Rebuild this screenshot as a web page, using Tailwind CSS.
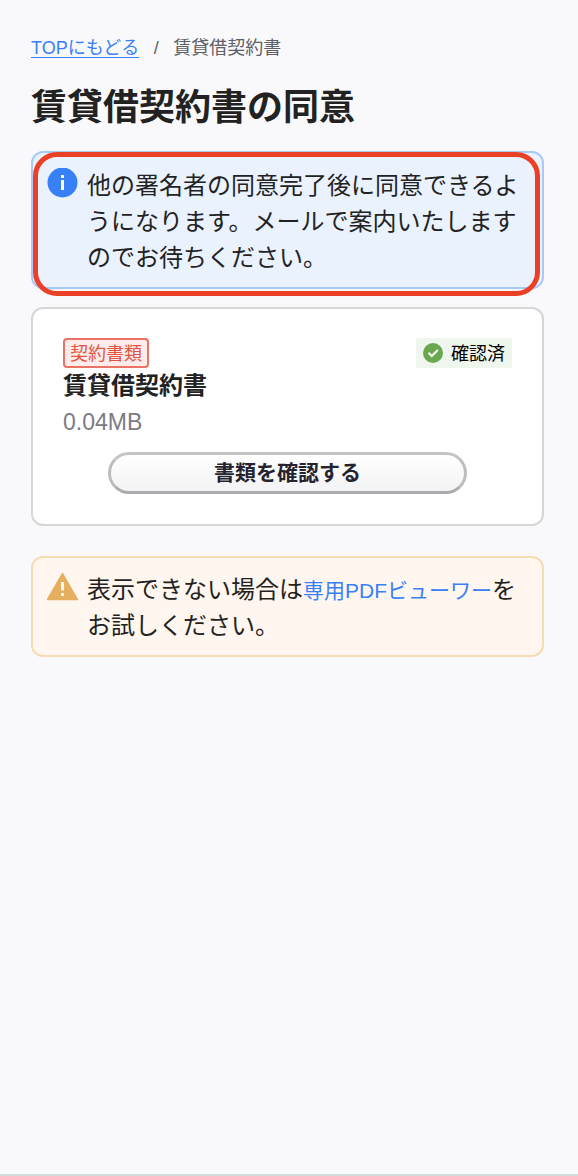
<!DOCTYPE html>
<html lang="ja">
<head>
<meta charset="utf-8">
<meta name="viewport" content="width=device-width, initial-scale=1">
<title>賃貸借契約書の同意</title>
<script src="https://cdn.jsdelivr.net/npm/@tailwindcss/browser@4"></script>
</head>
<body class="flex min-h-screen flex-col bg-[#f9f9fb] font-['Liberation_Sans','Noto_Sans_CJK_JP',sans-serif] text-[#222222]">
<main class="grow pt-8 pr-[34px] pl-[31px]">
  <nav aria-label="パンくず" class="flex h-8 items-center text-[18px] leading-8 text-[#5f5f67]">
    <a href="#" class="text-[#3880f7] underline decoration-1 underline-offset-3">TOPにもどる</a>
    <span class="w-[34px] text-center">/</span>
    <span>賃貸借契約書</span>
  </nav>
  <h1 class="mt-[17px] text-[36px] leading-[54px] font-bold">賃貸借契約書の同意</h1>

  <section class="relative mt-4 flex gap-2 rounded-xl border-2 border-[#a9c9f9] bg-[#eaf2fe] px-3.5 pt-[15px] pb-[11px]">
    <svg class="size-8 shrink-0" viewBox="0 0 32 32" aria-hidden="true">
      <circle cx="15.5" cy="14.5" r="15" fill="#3880f7"/>
      <path d="M14 7h3v3h-3zM14 12h3v10h-3z" fill="#fff"/>
    </svg>
    <p class="text-[24px] leading-9">他の署名者の同意完了後に同意できるようになります。メールで案内いたしますのでお待ちください。</p>
    <div class="pointer-events-none absolute -top-px right-0.5 -bottom-[9px] left-0 rounded-3xl border-5 border-[#ea4025]"></div>
  </section>

  <section class="mt-[18px] rounded-xl border-2 border-[#d6d6d8] bg-white px-[30px] pt-[29px] pb-[30px]">
    <div class="flex items-start justify-between">
      <span class="flex h-[30px] items-center rounded-sm border-2 border-[#ea7365] bg-[#fdecea] px-[5px] pt-0.5 text-[18px] leading-6 text-[#e45442]">契約書類</span>
      <span class="flex h-[30px] items-center gap-2 rounded-xs bg-[#eff6ee] px-[7px] text-[18px] leading-6 text-black">
        <svg class="size-5" viewBox="0 0 20 20" fill="none" aria-hidden="true">
          <circle cx="10" cy="10" r="10" fill="#6aa84f"/>
          <path d="M5.500 9.800l3.300 3.200 6-6" stroke="#fff" stroke-width="2"/>
        </svg>
        <span class="pt-0.5">確認済</span>
      </span>
    </div>
    <h2 class="text-[24px] leading-9 font-bold">賃貸借契約書</h2>
    <p class="text-[23px] leading-9 text-[#7b7b82]">0.04MB</p>
    <button type="button" class="mx-auto mt-3 block h-[42px] w-4/5 rounded-full border-3 border-[#bcbcbe] border-t-[#c4c4c5] border-b-[#acacaf] bg-linear-to-b from-white to-[#f3f3f5] text-[21px] leading-9 font-bold text-[#25232f]">書類を確認する</button>
  </section>

  <section class="mt-[30px] flex gap-2 rounded-xl border-2 border-[#f5dcb4] bg-[#fff7ef] px-3.5 pt-3.5 pb-[11px]">
    <svg class="size-8 shrink-0" viewBox="0 0 32 32" aria-hidden="true">
      <path d="M15.500 1.500L30.500 27.500H.500z" fill="#e6af60" stroke="#e6af60" stroke-width="1.5" stroke-linejoin="round"/>
      <path d="M14 10h3v8.500h-3zM14 21h3v3h-3z" fill="#fff7ef"/>
    </svg>
    <p class="text-[24px] leading-9">表示できない場合は<a href="#" class="text-[21px] leading-none text-[#3880f7]">専用PDFビューワー</a>をお試しください。</p>
  </section>
</main>
<footer class="h-0.5 bg-[#d5dbdc]"></footer>
</body>
</html>
